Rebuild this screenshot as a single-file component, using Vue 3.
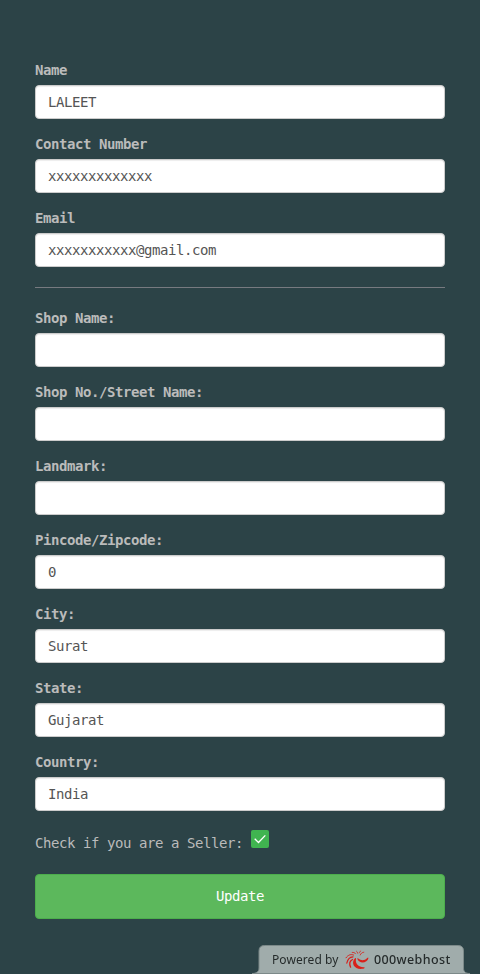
<script setup>
const contact = [
  { label: 'Name', value: 'LALEET' },
  { label: 'Contact Number', value: 'xxxxxxxxxxxxx' },
  { label: 'Email', value: 'xxxxxxxxxxx@gmail.com' },
]
const shop = [
  { label: 'Shop Name:', value: '' },
  { label: 'Shop No./Street Name:', value: '' },
  { label: 'Landmark:', value: '' },
  { label: 'Pincode/Zipcode:', value: '0' },
  { label: 'City:', value: 'Surat' },
  { label: 'State:', value: 'Gujarat' },
  { label: 'Country:', value: 'India' },
]
</script>

<template>
  <main class="page">
    <form class="form" @submit.prevent>
      <label v-for="f in contact" :key="f.label" class="group">
        <span class="caption">{{ f.label }}</span>
        <input v-model="f.value" class="control" type="text" />
      </label>
      <hr class="rule" />
      <label v-for="f in shop" :key="f.label" class="group">
        <span class="caption">{{ f.label }}</span>
        <input v-model="f.value" class="control" type="text" />
      </label>
      <div class="seller">
        <span>Check if you are a Seller:</span>
        <span class="check" role="checkbox" aria-checked="true">
          <svg width="18" height="18" viewBox="0 0 18 18"><path d="M3.7 8.8 7.5 12.5 14.3 5.4" fill="none" stroke="#fff" stroke-width="1.3" /></svg>
        </span>
      </div>
      <button class="update" type="submit">Update</button>
    </form>
    <div class="badge">
      <svg class="plate" width="222" height="29" viewBox="0 0 222 29">
        <path d="M2 28.500C6 28.500 9 27 9 23V6Q9 .5 14.500 .5H208Q213.500 .5 213.500 6V23C213.500 27 216 28.500 220 28.500Z" fill="#a0acab" stroke="#7c8989" />
      </svg>
      <span class="powered">Powered by</span>
      <svg class="swirl" width="24" height="20" viewBox="0 0 24 20" fill="#d9201a">
        <path d="M9.800 8.500C5.500 13.500 9.500 19.800 17.500 18.800C19.800 18.400 20.500 17.300 18.500 17.200C13.500 17 10 13.500 11 9C11 8 10.500 7.700 9.800 8.500Z" />
        <path d="M12.300 8.800C14.500 14.500 22.500 12.800 23.400 8.200C23.500 7.300 22.800 7.300 22.200 8C19.500 11 16 10.800 13.300 8.500C12.700 8 12.100 8.200 12.300 8.800Z" />
        <g fill="none" stroke="#d9201a" stroke-linecap="round">
          <path d="M7.500 9.500C4.500 11 4.200 14 5.600 17.200" stroke-width="1.300" />
          <path d="M8 6.800C4.500 7 2.500 9.500 1.800 13.200" stroke-width="1.200" />
          <path d="M8.500 5C5.800 3.800 3 5 1 7.800" stroke-width="1" />
          <path d="M7.200 2.400C8.600 2.200 9.800 2.700 10.600 3.700M11.500 1.200C12.200 1.700 12.600 2.300 12.700 3.200M18.800 2.200C17.300 2.200 15.800 3.300 15.200 5M15.700 1C14.900 1.500 14.500 2 14.300 2.800" stroke-width=".8" />
        </g>
      </svg>
      <span class="brand">000webhost</span>
    </div>
  </main>
</template>

<style>
body { margin: 0; background: #2c4347; }
</style>

<style scoped>
.page {
  box-sizing: border-box;
  height: 974px;
  padding: 60px 35px 0;
  overflow: hidden;
  background: #2c4347;
  color: #bbb;
  font: 14px/20px "DejaVu Sans Mono", monospace;
  letter-spacing: -.428px;
}
.form { display: flex; flex-direction: column; }
.group { display: flex; flex-direction: column; gap: 5px; margin-bottom: 15px; }
.caption { font-weight: 700; }
.control {
  box-sizing: border-box;
  height: 34px;
  padding: 6px 12px;
  border: 1px solid #ccc;
  border-radius: 4px;
  background: #fff;
  box-shadow: inset 0 1px 1px rgba(0, 0, 0, .075);
  color: #555;
  font: inherit;
  letter-spacing: inherit;
  outline: 0;
}
.rule { width: 100%; height: 1px; margin: 5px 0 20px; border: 0; background: #777a80; }
.seller { display: flex; gap: 8px; height: 44px; padding-top: 4px; }
.seller > span:first-child { padding-top: 3px; }
.check { width: 18px; height: 18px; border-radius: 2px; background: #40b450; }
.check svg { display: block; }
.update {
  height: 45px;
  padding: 0 0 2px;
  border: 1px solid #4cae4c;
  border-radius: 4px;
  background: #5cb85c;
  color: #fff;
  font: inherit;
  letter-spacing: inherit;
}
.badge {
  position: fixed;
  right: 8px;
  bottom: 0;
  box-sizing: border-box;
  display: flex;
  align-items: center;
  width: 222px;
  height: 29px;
  padding-left: 22px;
  color: #252b2b;
  font: 12px/20px "Noto Sans", sans-serif;
  letter-spacing: .08px;
}
.plate { position: absolute; left: 0; top: 0; }
.powered, .swirl, .brand { position: relative; }
.powered { width: 66px; white-space: nowrap; }
.swirl { margin: 0 5px 0 7px; }
.brand { font-size: 12.500px; font-weight: 500; letter-spacing: .38px; }
</style>
